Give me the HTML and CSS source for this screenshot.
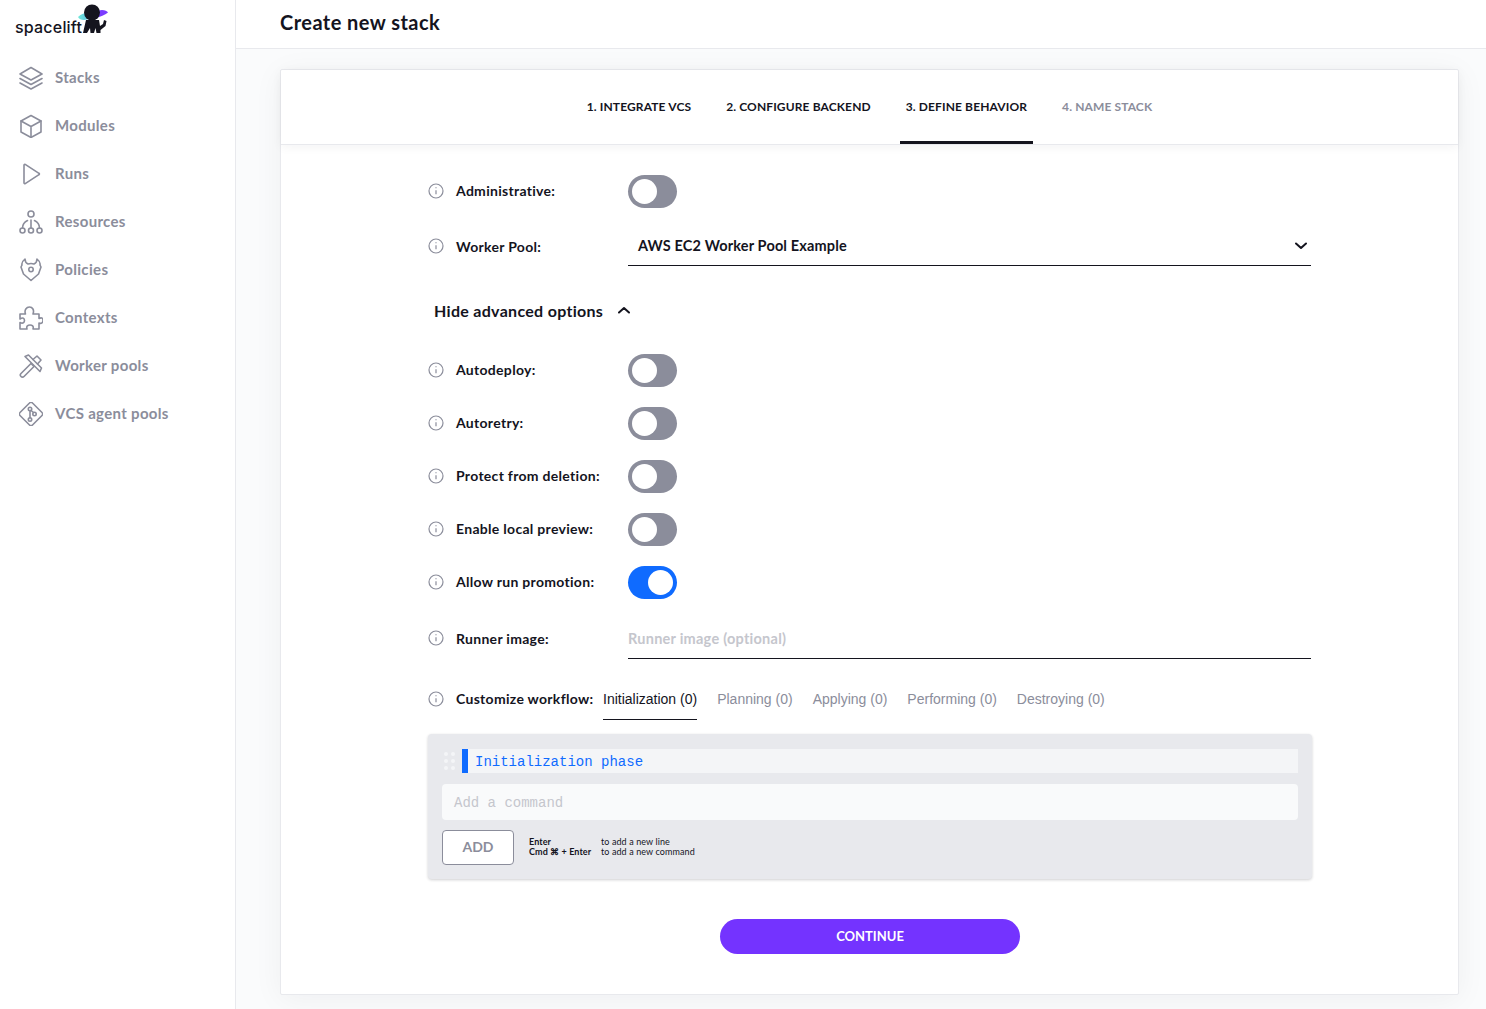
FILE: index.html
```html
<!DOCTYPE html>
<html lang="en">
<head>
<meta charset="utf-8">
<title>Create new stack</title>
<link rel="stylesheet" href="styles.css">
</head>
<body>
<div class="app">
  <aside class="sidebar">
    <div class="logo">
      <span class="logo-text">spacelift</span>
      <svg class="logo-mark" width="40" height="34" viewBox="0 0 40 34">
        <defs><linearGradient id="ring" x1="0" x2="1"><stop offset="0" stop-color="#6fe8d8"/><stop offset=".45" stop-color="#5fb8e8"/><stop offset=".75" stop-color="#7a3cff"/><stop offset="1" stop-color="#7a3cff"/></linearGradient></defs>
        <path d="M6 15C9 12 13 11 16 10L30 8C33 8 35 9 36 10.500C33 13 28 15 24 16L12 18C9 18 7 17 6 15Z" fill="url(#ring)"/>
        <circle cx="20" cy="10.500" r="8" fill="#14141e"/>
        <path d="M11 31 L14 18 L27 18 L28 24 L31 22 L32 18 L34.500 19 L33.500 24 L28.500 28 L28.500 31 L24.500 31 L23.500 26 L22 31 L18.500 31 L18 26 L15 31Z" fill="#14141e"/>
      </svg>
    </div>
    <nav class="nav">
      <a class="nav-item"><svg class="nav-icon" viewBox="0 0 24 24"><path d="M12 1.5 23 8 12 14 1 8Z"/><path d="M1 12.5 12 18.500 23 12.500"/><path d="M1 17 12 23 23 17"/></svg>Stacks</a>
      <a class="nav-item"><svg class="nav-icon" viewBox="0 0 24 24"><path d="M12 1.500 22 7v11l-10 5.500L2 18V7Z"/><path d="M2 7l10 5.500L22 7M12 12.500v11"/></svg>Modules</a>
      <a class="nav-item"><svg class="nav-icon" viewBox="0 0 24 24"><path d="M5 3v18a.8.8 0 0 0 1.200.6L20 12.700a.8.8 0 0 0 0-1.400L6.200 2.400A.8.800 0 0 0 5 3Z"/></svg>Runs</a>
      <a class="nav-item"><svg class="nav-icon" viewBox="0 0 24 24"><circle cx="12" cy="4" r="3"/><circle cx="3.500" cy="20.500" r="2.500"/><circle cx="12" cy="20.500" r="2.500"/><circle cx="20.500" cy="20.500" r="2.500"/><path d="M12 10v8M3.500 18c0-4 2-6 5-7.500M20.500 18c0-4-2-6-5-7.500"/></svg>Resources</a>
      <a class="nav-item"><svg class="nav-icon" viewBox="0 0 24 24"><path d="M6 1C3.500 3 2.500 5 3 7L2 9l2.500 7 7.500 6.500 7.500-6.500L22 9l-1-2c.5-2-.5-4-3-6 0 2.500-1 4-3 5-2-.7-4-.7-6 0-2-1-3-2.500-3-5Z"/><circle cx="12" cy="11.500" r="2.200"/></svg>Policies</a>
      <a class="nav-item"><svg class="nav-icon" viewBox="0 0 24 24"><path d="M1 8h5.500C5 4 7.500 1 10.500 1s5 3 3.500 7h6v4.500c3-1.500 4 0 4 2s-1.500 3.500-4 2.500v6h-6c1-3-1-4-3-4s-4 1-3 4H1v-6.500c3 1.500 4.500 0 4.500-2S4 11 1 13Z"/></svg>Contexts</a>
      <a class="nav-item"><svg class="nav-icon" viewBox="0 0 24 24"><path d="M2 19.500 12 9.500l3 3-10 10a2.100 2.100 0 0 1-3-3Z"/><path d="M6 2.500 9.500 1 22.500 14l-1.500 3.500Z"/><path d="M14 5.500 18 2l4 4-3.500 4"/></svg>Worker pools</a>
      <a class="nav-item"><svg class="nav-icon" viewBox="0 0 24 24"><path d="M10.500 1 1 10.500a2 2 0 0 0 0 3L10.500 23a2 2 0 0 0 3 0l9.500-9.500a2 2 0 0 0 0-3L13.500 1a2 2 0 0 0-3 0Z"/><circle cx="11" cy="7" r="1.700"/><circle cx="11" cy="17.500" r="1.700"/><circle cx="15.500" cy="12" r="1.700"/><path d="M11 9v7M12 8.500l2.500 2"/></svg>VCS agent pools</a>
    </nav>
  </aside>
  <div class="main">
    <header class="topbar"><h1 class="title">Create new stack</h1></header>
    <div class="content">
      <section class="card">
        <div class="steps">
          <div class="step">1. INTEGRATE VCS</div>
          <div class="step">2. CONFIGURE BACKEND</div>
          <div class="step step-active">3. DEFINE BEHAVIOR</div>
          <div class="step step-muted">4. NAME STACK</div>
        </div>
        <form class="form">
          <div class="row row-admin">
            <div class="label"><svg class="info" viewBox="0 0 16 16"><circle cx="8" cy="8" r="7"/><path d="M8 7.200v4M8 4.300v1"/></svg>Administrative:</div>
            <span class="toggle"></span>
          </div>
          <div class="row row-pool">
            <div class="label"><svg class="info" viewBox="0 0 16 16"><circle cx="8" cy="8" r="7"/><path d="M8 7.200v4M8 4.300v1"/></svg>Worker Pool:</div>
            <div class="select">AWS EC2 Worker Pool Example
              <svg class="chevron" viewBox="0 0 12 8"><path d="M1 1.500 6 6l5-4.500"/></svg>
            </div>
          </div>
          <div class="advanced">Hide advanced options
            <svg class="chevron chevron-up" viewBox="0 0 12 8"><path d="M1 6.500 6 2l5 4.500"/></svg>
          </div>
          <div class="toggles">
            <div class="row">
              <div class="label"><svg class="info" viewBox="0 0 16 16"><circle cx="8" cy="8" r="7"/><path d="M8 7.200v4M8 4.300v1"/></svg>Autodeploy:</div>
              <span class="toggle"></span>
            </div>
            <div class="row">
              <div class="label"><svg class="info" viewBox="0 0 16 16"><circle cx="8" cy="8" r="7"/><path d="M8 7.200v4M8 4.300v1"/></svg>Autoretry:</div>
              <span class="toggle"></span>
            </div>
            <div class="row">
              <div class="label"><svg class="info" viewBox="0 0 16 16"><circle cx="8" cy="8" r="7"/><path d="M8 7.200v4M8 4.300v1"/></svg>Protect from deletion:</div>
              <span class="toggle"></span>
            </div>
            <div class="row">
              <div class="label"><svg class="info" viewBox="0 0 16 16"><circle cx="8" cy="8" r="7"/><path d="M8 7.200v4M8 4.300v1"/></svg>Enable local preview:</div>
              <span class="toggle"></span>
            </div>
            <div class="row">
              <div class="label"><svg class="info" viewBox="0 0 16 16"><circle cx="8" cy="8" r="7"/><path d="M8 7.200v4M8 4.300v1"/></svg>Allow run promotion:</div>
              <span class="toggle toggle-on"></span>
            </div>
          </div>
          <div class="row row-runner">
            <div class="label"><svg class="info" viewBox="0 0 16 16"><circle cx="8" cy="8" r="7"/><path d="M8 7.200v4M8 4.300v1"/></svg>Runner image:</div>
            <div class="runner-input">Runner image (optional)</div>
          </div>
          <div class="row row-workflow">
            <div class="label label-auto"><svg class="info" viewBox="0 0 16 16"><circle cx="8" cy="8" r="7"/><path d="M8 7.200v4M8 4.300v1"/></svg>Customize workflow:</div>
            <div class="tabs">
              <span class="tab tab-active">Initialization (0)</span>
              <span class="tab">Planning (0)</span>
              <span class="tab">Applying (0)</span>
              <span class="tab">Performing (0)</span>
              <span class="tab">Destroying (0)</span>
            </div>
          </div>
          <div class="panel">
            <div class="phase">
              <span class="grip"><i></i><i></i><i></i><i></i><i></i><i></i></span>
              <div class="phase-name">Initialization phase</div>
            </div>
            <div class="command">Add a command</div>
            <div class="actions">
              <span class="add">ADD</span>
              <div class="hints">
                <div class="hint-keys"><div>Enter</div><div>Cmd ⌘ + Enter</div></div>
                <div class="hint-text"><div>to add a new line</div><div>to add a new command</div></div>
              </div>
            </div>
          </div>
          <div class="continue-wrap"><span class="continue">CONTINUE</span></div>
        </form>
      </section>
    </div>
  </div>
</div>
</body>
</html>
```
FILE: styles.css
```css
* { box-sizing: border-box; }
html, body { margin: 0; height: 100%; }
body { font-family: "Lato", "Noto Sans", sans-serif; color: #14141e; background: #fff; overflow: hidden; }
.app { display: flex; height: 1009px; }
.sidebar { width: 236px; flex: none; border-right: 1px solid #e8e9ed; background: #fff; }
.logo { height: 54px; position: relative; }
.logo-text { font-family: "Inter", sans-serif; font-size: 16px; font-weight: 500; letter-spacing: .2px; position: absolute; left: 15px; top: 17px; line-height: 20px; }
.logo-mark { position: absolute; left: 72px; top: 2px; }
.nav { display: flex; flex-direction: column; }
.nav-item { display: flex; align-items: center; height: 48px; padding: 0 0 2px 19px; gap: 12px; font-size: 15px; font-weight: 700; letter-spacing: .32px; color: #8b8d9b; }
.nav-icon { width: 24px; height: 24px; margin-top: 2px; fill: none; stroke: #8b8d9b; stroke-width: 1.600; stroke-linejoin: round; stroke-linecap: round; flex: none; }
.main { flex: 1; min-width: 0; background: #fafbfc; }
.topbar { height: 49px; background: #fff; border-bottom: 1px solid #e8e9ed; padding: 0 44px; display: flex; align-items: center; }
.title { margin: 0 0 5px; font-size: 20px; font-weight: 700; letter-spacing: .45px; line-height: 26px; }
.content { padding: 20px 27px 0 44px; }
.card { height: 926px; background: #fff; border: 1px solid #e8e9ed; border-radius: 2px; box-shadow: 0 4px 30px rgba(20,20,30,.05); }
.steps { height: 75px; display: flex; justify-content: center; gap: 24px; border-bottom: 1px solid #e8e9ed; box-shadow: 0 2px 10px rgba(20,20,30,.05); }
.step { height: 74px; padding: 0 5.500px 2px; display: flex; align-items: center; font-size: 12px; font-weight: 700; letter-spacing: .12px; color: #14141e; }
.step-active { box-shadow: inset 0 -3px 0 #14141e; }
.step-muted { color: #8b8d9b; }
.form { padding: 30px 146px 0 147px; display: flex; flex-direction: column; }
.row { display: flex; align-items: center; height: 33px; }
.label { width: 200px; flex: none; display: flex; align-items: center; gap: 12px; padding-bottom: 2px; font-size: 14px; font-weight: 700; letter-spacing: .3px; }
.label-auto { width: 175px; }
.info { width: 16px; height: 16px; fill: none; stroke: #8b8d9b; stroke-width: 1.200; flex: none; }
.toggle { display: block; width: 49px; height: 33px; border-radius: 17px; background: #8b8d9b; position: relative; }
.toggle::after { content: ""; position: absolute; left: 4px; top: 4px; width: 25px; height: 25px; border-radius: 50%; background: #fff; }
.toggle-on { background: #0f6bff; }
.toggle-on::after { left: 20px; }
.row-pool { margin-top: 16px; height: 42px; margin-right: 1px; }
.row-pool .label { margin-top: 4px; }
.select { flex: 1; height: 42px; border-bottom: 1px solid #14141e; display: flex; align-items: center; justify-content: space-between; padding: 2px 4px 0 10px; font-size: 14.500px; font-weight: 700; letter-spacing: .15px; }
.chevron { width: 12px; height: 8px; fill: none; stroke: #14141e; stroke-width: 2; stroke-linecap: round; stroke-linejoin: round; }
.advanced { height: 26px; margin: 31px 0 0 6px; display: flex; align-items: center; gap: 15px; font-size: 16px; font-weight: 700; letter-spacing: .3px; }
.toggles { display: flex; flex-direction: column; gap: 20px; margin-top: 31px; }
.row-runner { margin-top: 16px; height: 44px; margin-right: 1px; }
.row-runner .label { margin-top: 4px; }
.runner-input { flex: 1; height: 44px; padding-top: 4px; border-bottom: 1px solid #14141e; display: flex; align-items: center; font-size: 14.500px; font-weight: 700; letter-spacing: .25px; color: #c5c6cd; }
.row-workflow { height: 41px; margin-top: 20px; }
.tabs { display: flex; gap: 20px; height: 41px; }
.tab { height: 41px; padding-bottom: 2px; display: flex; align-items: center; font-family: "Liberation Sans", sans-serif; font-size: 14px; color: #8b8d9b; }
.tab-active { color: #14141e; box-shadow: inset 0 -1px 0 #14141e; }
.panel { margin-top: 14px; height: 145px; background: #e8e9ed; border-radius: 4px; box-shadow: 0 1px 3px rgba(20,20,30,.2); padding: 15px 14px; }
.phase { display: flex; align-items: center; height: 24px; background: #f4f5f7; }
.grip { width: 20px; height: 24px; background: #e8e9ed; display: grid; grid-template-columns: 4px 4px; gap: 3px; align-content: center; padding-left: 2px; flex: none; }
.grip i { width: 4px; height: 4px; background: #f4f5f7; border-radius: 50%; }
.phase-name { height: 24px; border-left: 6px solid #0f6bff; padding: 1px 0 0 7px; font-family: "Liberation Mono", monospace; font-size: 14px; line-height: 24px; color: #0f6bff; }
.command { height: 36px; margin-top: 11px; border-radius: 4px; background: #f9fafb; padding: 1px 0 0 12px; font-family: "Liberation Mono", monospace; font-size: 14px; line-height: 36px; color: #c5c6cd; }
.actions { display: flex; align-items: center; margin-top: 10px; gap: 15px; }
.add { width: 72px; height: 35px; padding-bottom: 2px; border: 1px solid #8b8d9b; border-radius: 4px; background: #fff; display: flex; align-items: center; justify-content: center; font-size: 14px; font-weight: 700; color: #8b8d9b; }
.hints { display: flex; gap: 9px; margin-top: -2px; font-size: 9px; line-height: 10px; letter-spacing: .1px; }
.hint-keys { width: 63px; font-weight: 700; }
.continue-wrap { display: flex; justify-content: center; margin-top: 40px; }
.continue { width: 300px; height: 35px; padding-bottom: 1px; border-radius: 18px; background: #7433ff; color: #fff; display: flex; align-items: center; justify-content: center; font-size: 13px; font-weight: 700; }
```
